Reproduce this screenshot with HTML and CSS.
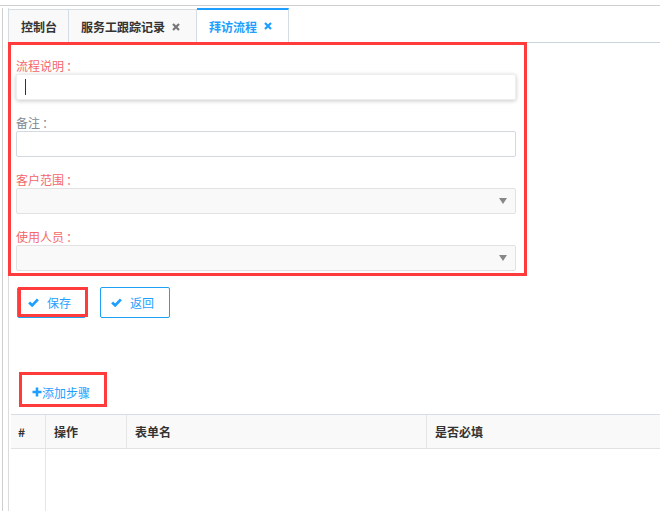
FILE: index.html
```html
<!DOCTYPE html>
<html>
<head>
<meta charset="utf-8">
<link rel="stylesheet" href="styles.css">
</head>
<body>
<div class="topline"></div>
<div class="page">
  <div class="main">
    <div class="tabs">
      <div class="tab first">控制台</div>
      <div class="tab">服务工跟踪记录<svg class="close" viewBox="0 0 8 8"><path d="M1 1L7 7M7 1L1 7"/></svg></div>
      <div class="tab active">拜访流程<svg class="close" viewBox="0 0 8 8"><path d="M1 1L7 7M7 1L1 7"/></svg></div>
    </div>
    <div class="form-box">
      <div class="group">
        <div class="label req">流程说明<span class="colon">：</span></div>
        <div class="field focused"><span class="caret"></span></div>
      </div>
      <div class="group">
        <div class="label">备注<span class="colon">：</span></div>
        <div class="field"></div>
      </div>
      <div class="group">
        <div class="label req">客户范围<span class="colon">：</span></div>
        <div class="field select"><span class="arrow"></span></div>
      </div>
      <div class="group">
        <div class="label req">使用人员<span class="colon">：</span></div>
        <div class="field select"><span class="arrow"></span></div>
      </div>
    </div>
    <div class="btn-row">
      <div class="btn save"><svg class="check" viewBox="0 0 10 8"><path d="M1 4L3.8 6.6L9 1.2"/></svg><span>保存</span></div>
      <div class="btn"><svg class="check" viewBox="0 0 10 8"><path d="M1 4L3.8 6.6L9 1.2"/></svg><span>返回</span></div>
    </div>
    <div class="add-box">
      <span class="add"><svg class="plus" viewBox="0 0 10 10"><path d="M5 0.5V9.5M0.5 5H9.5"/></svg>添加步骤</span>
    </div>
    <div class="table">
      <div class="thead">
        <div class="th c1">#</div>
        <div class="th c2">操作</div>
        <div class="th c3">表单名</div>
        <div class="th c4">是否必填</div>
      </div>
      <div class="tbody">
        <div class="td c1"></div>
        <div class="td rest"></div>
      </div>
    </div>
  </div>
</div>
</body>
</html>
```
FILE: styles.css
```css
html, body {
  margin: 0;
  padding: 0;
  background: #fff;
  overflow: hidden;
}
body {
  width: 660px;
  height: 511px;
  font-family: "Noto Sans CJK SC", "Liberation Sans", sans-serif;
  font-size: 12px;
  color: #333;
}
.topline {
  height: 5px;
  border-bottom: 1px solid #cfcfcf;
}
.page {
  margin-left: 2px;
  border-left: 1px solid #cfcfcf;
  height: 505px;
}
.main {
  margin-left: 5px;
  border-left: 1px solid #dcdcdc;
  height: 505px;
}
.tabs {
  margin-top: 2px;
  margin-left: -1px;
  display: flex;
  height: 34px;
  border-bottom: 1px solid #c8d3de;
}
.tab {
  box-sizing: border-box;
  margin-top: 1px;
  height: 34px;
  display: flex;
  align-items: center;
  padding: 0 16px 0 12px;
  border-top: 1px solid #d4dce4;
  border-right: 1px solid #d4dce4;
  background: #f9f9f9;
  color: #333;
  font-weight: 600;
  margin-bottom: -1px;
}
.tab.first {
  border-left: 1px solid #d4dce4;
  padding-right: 11px;
}
.tab.active {
  margin-top: 0;
  height: 35px;
  border-top: 2px solid #1e9fff;
  background: #fff;
  color: #1e9fff;
  padding-bottom: 1px;
}
.close {
  width: 8px;
  height: 8px;
  margin-left: 7px;
  stroke: #777;
  stroke-width: 2.2;
  fill: none;
}
.tab.active .close {
  stroke: #1e9fff;
}
.form-box {
  margin: -1px 0 0 -1px;
  width: 500px;
  border: 3px solid #ff3b3b;
  padding: 12px 8px 2px 5px;
  position: relative;
}
.group {
  margin-bottom: 14px;
}
.group:last-child {
  margin-bottom: 0;
}
.label {
  line-height: 17px;
  height: 17px;
  color: #808a94;
}
.colon {
  display: inline-block;
  width: 12px;
  text-align: center;
  padding-left: 2px;
}
.label.req {
  color: #f4676b;
}
.field {
  box-sizing: border-box;
  height: 26px;
  border: 1px solid #d2d9e0;
  border-radius: 2px;
  background: #fff;
  position: relative;
}
.field.focused {
  border-color: #eeeeee;
  box-shadow: 0 1px 4px rgba(0, 0, 0, 0.22);
}
.caret {
  position: absolute;
  left: 8px;
  top: 4px;
  width: 1px;
  height: 16px;
  background: #333;
}
.field.select {
  background: #f9f9f9;
  border-color: #e2e2e2;
}
.arrow {
  position: absolute;
  right: 8px;
  top: 9px;
  width: 0;
  height: 0;
  border-left: 4px solid transparent;
  border-right: 4px solid transparent;
  border-top: 6px solid #888;
}
.btn-row {
  display: flex;
  gap: 14px;
  margin: 11px 0 0 8px;
}
.btn {
  box-sizing: border-box;
  width: 70px;
  height: 31px;
  border: 1px solid #1ea0f5;
  border-radius: 2px;
  display: flex;
  align-items: center;
  padding-left: 10px;
  color: #1e9fff;
  position: relative;
}
.btn span {
  margin-left: 8px;
}
.btn.save {
  width: 69px;
}
.btn.save::after {
  content: "";
  position: absolute;
  left: 0;
  top: -1px;
  right: -3px;
  bottom: 0;
  border: 3px solid #ff3b3b;
}
.check {
  width: 11px;
  height: 9px;
  stroke: #1e9fff;
  stroke-width: 2.5;
  fill: none;
}
.add-box {
  box-sizing: border-box;
  margin: 54px 0 0 10px;
  width: 88px;
  height: 35px;
  border: 3px solid #ff3b3b;
  display: flex;
  align-items: center;
  padding: 5px 0 0 10px;
}
.add {
  display: flex;
  align-items: center;
  color: #1e9fff;
}
.plus {
  width: 10px;
  height: 10px;
  stroke: #1e9fff;
  stroke-width: 2.6;
  fill: none;
}
.table {
  margin: 7px 0 0 2px;
  width: 649px;
}
.thead {
  display: flex;
  height: 33px;
  border-top: 1px solid #d5dde6;
  border-bottom: 1px solid #e2e2e2;
  background: #f9f9f9;
}
.th {
  box-sizing: border-box;
  display: flex;
  align-items: center;
  padding-left: 8px;
  font-weight: 600;
  color: #333;
}
.c1 {
  width: 35px;
  padding-left: 7px;
  border-right: 1px solid #e6e6e6;
}
.c2 {
  width: 81px;
  border-right: 1px solid #e6e6e6;
}
.c3 {
  width: 300px;
  border-right: 1px solid #e6e6e6;
}
.c4 {
  flex: 1;
}
.tbody {
  display: flex;
  height: 70px;
}
.td.c1 {
  box-sizing: border-box;
}
```
